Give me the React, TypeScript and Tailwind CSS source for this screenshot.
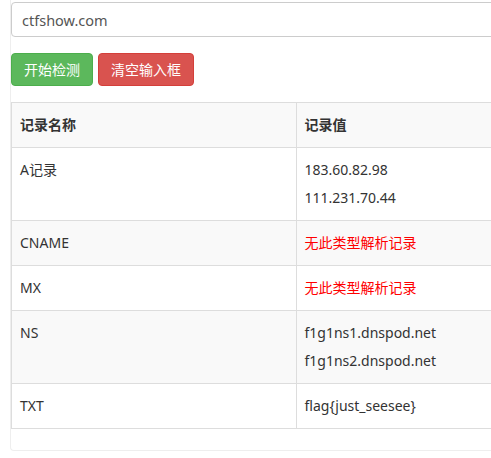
import React from "react";

const font = { fontFamily: '"Noto Sans", "Noto Sans CJK SC", sans-serif' };

type Row = { name: string; values: string[]; red?: boolean; striped?: boolean };

const rows: Row[] = [
  { name: "A记录", values: ["183.60.82.98", "111.231.70.44"] },
  { name: "CNAME", values: ["无此类型解析记录"], red: true, striped: true },
  { name: "MX", values: ["无此类型解析记录"], red: true },
  { name: "NS", values: ["f1g1ns1.dnspod.net", "f1g1ns2.dnspod.net"], striped: true },
  { name: "TXT", values: ["flag{just_seesee}"] },
];

export default function App() {
  return (
    <div className="w-[491px] h-[458px] overflow-hidden bg-white text-[#333] text-[14px] leading-5" style={font}>
      <div className="w-[600px] ml-[10px] border-l border-b border-[#eeeeee] rounded-bl-[4px] pt-[2px] pb-[21px] pl-0">
        <div className="h-[35px] border border-[#cccccc] rounded-[4px] pl-[10px] flex items-center text-[14.5px] text-[#555]">
          ctfshow.com
        </div>
        <div className="mt-[16px] flex gap-[5px]">
          <button className="h-[33px] px-3 bg-[#5cb85c] border border-[#4cae4c] rounded-[4px] text-white text-[14px]">
            开始检测
          </button>
          <button className="h-[33px] px-3 bg-[#d9534f] border border-[#d43f3a] rounded-[4px] text-white text-[14px]">
            清空输入框
          </button>
        </div>
        <table className="mt-[16px] w-[570px] border-collapse border border-[#dddddd] table-fixed">
          <thead>
            <tr className="bg-[#f9f9f9]">
              <th className="w-1/2 text-left font-bold px-2 py-3 border border-[#dddddd] h-[45px]">记录名称</th>
              <th className="w-1/2 text-left font-bold px-2 py-3 border border-[#dddddd]">记录值</th>
            </tr>
          </thead>
          <tbody>
            {rows.map((r) => (
              <tr key={r.name} className={r.striped ? "bg-[#f9f9f9]" : "bg-white"}>
                <td className="align-top px-2 py-3 border border-[#dddddd]">{r.name}</td>
                <td className="align-top px-2 py-3 border border-[#dddddd]">
                  <div className={"flex flex-col gap-2 " + (r.red ? "text-[#ff0000]" : "")}>
                    {r.values.map((v) => (
                      <div key={v}>{v}</div>
                    ))}
                  </div>
                </td>
              </tr>
            ))}
          </tbody>
        </table>
      </div>
    </div>
  );
}
